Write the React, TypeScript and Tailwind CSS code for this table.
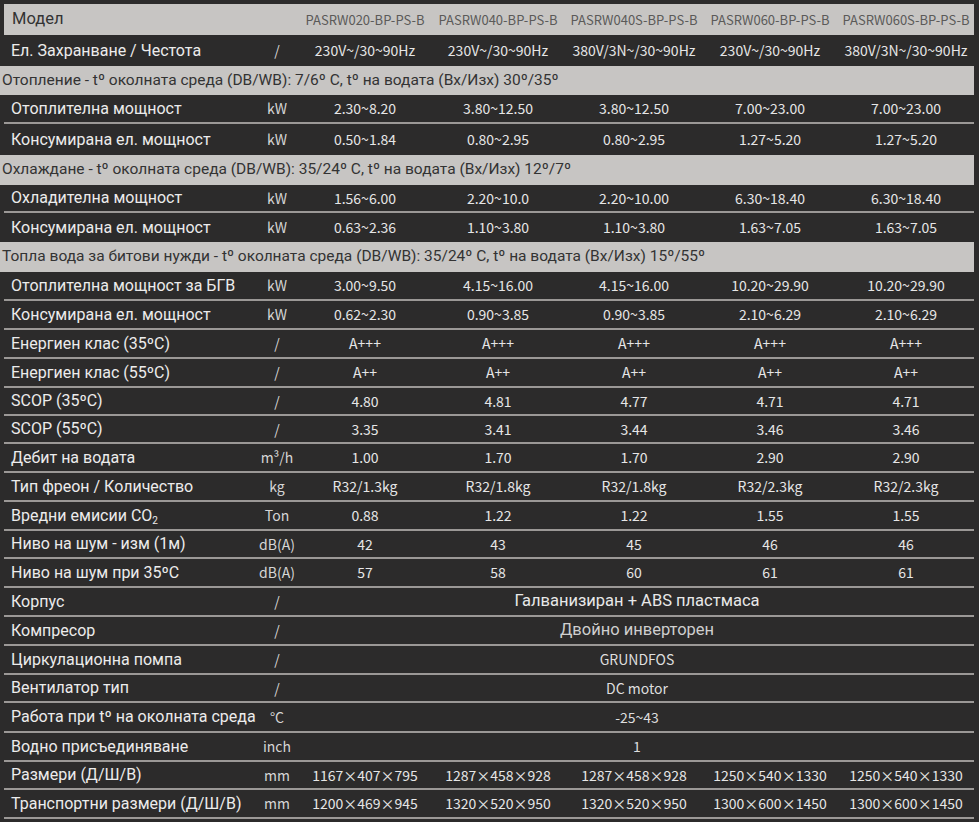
import React from "react";

type Row =
  | { kind: "head" }
  | { kind: "sec"; text: string; h: string }
  | { kind: "data"; label: React.ReactNode; unit: React.ReactNode; vals: string[]; h: string; line?: boolean }
  | { kind: "merged"; label: string; unit: string; val: string; big?: boolean; dim?: boolean; h: string; line?: boolean };

const models = ["PASRW020-BP-PS-B", "PASRW040-BP-PS-B", "PASRW040S-BP-PS-B", "PASRW060-BP-PS-B", "PASRW060S-BP-PS-B"];

const rows: Row[] = [
  { kind: "head" },
  { kind: "data", label: "Ел. Захранване / Честота", unit: "/", vals: ["230V~/30~90Hz", "230V~/30~90Hz", "380V/3N~/30~90Hz", "230V~/30~90Hz", "380V/3N~/30~90Hz"], h: "h-[31px]", line: false },
  { kind: "sec", text: "Отопление - tº околната среда (DB/WB): 7/6º C, tº на водата (Вх/Изх) 30º/35º", h: "h-[29px]" },
  { kind: "data", label: "Отоплителна мощност", unit: "kW", vals: ["2.30~8.20", "3.80~12.50", "3.80~12.50", "7.00~23.00", "7.00~23.00"], h: "h-[29px]", line: true },
  { kind: "data", label: "Консумирана ел. мощност", unit: "kW", vals: ["0.50~1.84", "0.80~2.95", "0.80~2.95", "1.27~5.20", "1.27~5.20"], h: "h-[31px]", line: false },
  { kind: "sec", text: "Охлаждане - tº околната среда (DB/WB): 35/24º C, tº на водата (Вх/Изх) 12º/7º", h: "h-[30px]" },
  { kind: "data", label: "Охладителна мощност", unit: "kW", vals: ["1.56~6.00", "2.20~10.0", "2.20~10.00", "6.30~18.40", "6.30~18.40"], h: "h-[28px]", line: true },
  { kind: "data", label: "Консумирана ел. мощност", unit: "kW", vals: ["0.63~2.36", "1.10~3.80", "1.10~3.80", "1.63~7.05", "1.63~7.05"], h: "h-[29px]", line: false },
  { kind: "sec", text: "Топла вода за битови нужди - tº околната среда (DB/WB): 35/24º C, tº на водата (Вх/Изх) 15º/55º", h: "h-[30px]" },
  { kind: "data", label: "Отоплителна мощност за БГВ", unit: "kW", vals: ["3.00~9.50", "4.15~16.00", "4.15~16.00", "10.20~29.90", "10.20~29.90"], h: "h-[29px]", line: true },
  { kind: "data", label: "Консумирана ел. мощност", unit: "kW", vals: ["0.62~2.30", "0.90~3.85", "0.90~3.85", "2.10~6.29", "2.10~6.29"], h: "h-[29px]", line: true },
  { kind: "data", label: "Енергиен клас (35ºC)", unit: "/", vals: ["A+++", "A+++", "A+++", "A+++", "A+++"], h: "h-[29px]", line: true },
  { kind: "data", label: "Енергиен клас (55ºC)", unit: "/", vals: ["A++", "A++", "A++", "A++", "A++"], h: "h-[29px]", line: true },
  { kind: "data", label: "SCOP (35ºC)", unit: "/", vals: ["4.80", "4.81", "4.77", "4.71", "4.71"], h: "h-[28px]", line: true },
  { kind: "data", label: "SCOP (55ºC)", unit: "/", vals: ["3.35", "3.41", "3.44", "3.46", "3.46"], h: "h-[28px]", line: true },
  { kind: "data", label: "Дебит на водата", unit: <>m³/h</>, vals: ["1.00", "1.70", "1.70", "2.90", "2.90"], h: "h-[29px]", line: true },
  { kind: "data", label: "Тип фреон / Количество", unit: "kg", vals: ["R32/1.3kg", "R32/1.8kg", "R32/1.8kg", "R32/2.3kg", "R32/2.3kg"], h: "h-[29px]", line: true },
  { kind: "data", label: <>Вредни емисии CO<sub className="text-[10px] relative top-[3px]">2</sub></>, unit: "Ton", vals: ["0.88", "1.22", "1.22", "1.55", "1.55"], h: "h-[29px]", line: true },
  { kind: "data", label: "Ниво на шум - изм (1м)", unit: "dB(A)", vals: ["42", "43", "45", "46", "46"], h: "h-[28px]", line: true },
  { kind: "data", label: "Ниво на шум при 35ºC", unit: "dB(A)", vals: ["57", "58", "60", "61", "61"], h: "h-[29px]", line: true },
  { kind: "merged", label: "Корпус", unit: "/", val: "Галванизиран + ABS пластмаса", big: true, h: "h-[29px]", line: true },
  { kind: "merged", label: "Компресор", unit: "/", val: "Двойно инверторен", big: true, dim: true, h: "h-[29px]", line: true },
  { kind: "merged", label: "Циркулационна помпа", unit: "/", val: "GRUNDFOS", h: "h-[29px]", line: true },
  { kind: "merged", label: "Вентилатор тип", unit: "/", val: "DC motor", h: "h-[28px]", line: true },
  { kind: "merged", label: "Работа при tº на околната среда", unit: "°C", val: "-25~43", h: "h-[30px]", line: true },
  { kind: "merged", label: "Водно присъединяване", unit: "inch", val: "1", h: "h-[29px]", line: true },
  { kind: "data", label: "Размери (Д/Ш/В)", unit: "mm", vals: ["1167×407×795", "1287×458×928", "1287×458×928", "1250×540×1330", "1250×540×1330"], h: "h-[28px]", line: true },
  { kind: "data", label: "Транспортни размери (Д/Ш/В)", unit: "mm", vals: ["1200×469×945", "1320×520×950", "1320×520×950", "1300×600×1450", "1300×600×1450"], h: "h-[29px]", line: true },
];

const grid = "grid grid-cols-[250px_46px_130px_repeat(4,136px)] items-center";
const labelFont = "font-['Roboto',sans-serif] font-normal";
const valFont = "font-['Noto_Sans_CJK_SC','Noto_Sans',sans-serif]";

export default function App() {
  return (
    <div className="w-[979px] h-[822px] overflow-hidden bg-[#2c2b2b] pt-[4px] pr-[5px] pl-[4px]">
      {rows.map((r, i) => {
        if (r.kind === "head") {
          return (
            <div key={i} className={`${grid} h-[31px] bg-[#c7c5c3]`}>
              <div className={`${labelFont} text-[16.5px] text-[#333333] pl-[8px]`}>Модел</div>
              <div />
              {models.map((m) => (
                <div key={m} className={`${valFont} text-[13px] text-[#5b5a59] text-center whitespace-nowrap`}>
                  {m}
                </div>
              ))}
            </div>
          );
        }
        if (r.kind === "sec") {
          return (
            <div key={i} className={`${r.h} -ml-[4px] flex items-center bg-[#c7c5c3] pl-[2px]`}>
              <span className={`${labelFont} text-[15.5px] text-[#333333] whitespace-nowrap`}>{r.text}</span>
            </div>
          );
        }
        const border = r.line ? "border-b-2 border-[#9b9896]" : "";
        if (r.kind === "merged") {
          return (
            <div key={i} className={`${grid} ${r.h} ${border}`}>
              <div className={`${labelFont} text-[16px] text-[#ececec] pl-[7px] whitespace-nowrap`}>{r.label}</div>
              <div className={`${valFont} text-[14px] text-[#d6d6d6] text-center`}>{r.unit}</div>
              <div
                className={`col-span-5 text-center whitespace-nowrap ${
                  r.big
                    ? `${labelFont} text-[16.5px] ${r.dim ? "text-[#cfcfcf]" : "text-[#e8e8e8]"}`
                    : `${valFont} text-[14px] text-[#dedede]`
                }`}
              >
                {r.val}
              </div>
            </div>
          );
        }
        return (
          <div key={i} className={`${grid} ${r.h} ${border}`}>
            <div className={`${labelFont} text-[16px] text-[#ececec] pl-[7px] whitespace-nowrap`}>{r.label}</div>
            <div className={`${valFont} text-[14px] text-[#d6d6d6] text-center whitespace-nowrap`}>{r.unit}</div>
            {r.vals.map((v, j) => (
              <div key={j} className={`${valFont} text-[14px] text-[#e6e6e6] text-center whitespace-nowrap`}>
                {v}
              </div>
            ))}
          </div>
        );
      })}
    </div>
  );
}
